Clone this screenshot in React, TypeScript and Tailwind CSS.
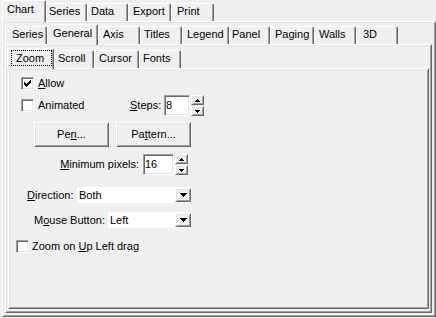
import React from "react";

const panel =
  "border border-t-white border-l-white border-r-[#696969] border-b-[#696969] shadow-[inset_1px_1px_0_#e3e3e3,inset_-1px_-1px_0_#a0a0a0]";
const raised =
  "border border-t-white border-l-white border-r-[#696969] border-b-[#696969] shadow-[inset_1px_1px_0_#e3e3e3,inset_-1px_-1px_0_#a0a0a0]";
const sunken =
  "border border-t-[#a0a0a0] border-l-[#a0a0a0] border-r-white border-b-white shadow-[inset_1px_1px_0_#696969,inset_-1px_-1px_0_#e3e3e3]";

type TabDef = { label: React.ReactNode; cls: string; sel?: boolean; focus?: boolean };

function Tab({ t, selH }: { t: TabDef; selH: string }) {
  if (t.sel) {
    return (
      <div
        className={`relative z-10 -mb-px ${selH} ${t.cls} shrink-0 bg-[#f0f0f0] border-t border-l border-r border-t-white border-l-white border-r-[#696969] rounded-t-[2px] shadow-[inset_-1px_0_0_#a0a0a0]`}
      >
        {t.focus ? (
          <div className="ml-[3px] mt-px h-[16px] w-[41px] border border-dotted border-black pl-[4px] leading-[14px]">
            {t.label}
          </div>
        ) : (
          <div className="pt-px leading-[14px] whitespace-nowrap">{t.label}</div>
        )}
      </div>
    );
  }
  return (
    <div
      className={`h-[18px] ${t.cls} shrink-0 border-t border-l border-r border-t-white border-l-white border-r-[#696969] rounded-t-[2px] shadow-[inset_-1px_0_0_#a0a0a0] leading-[14px] whitespace-nowrap`}
    >
      {t.label}
    </div>
  );
}

function CheckBox({ checked }: { checked?: boolean }) {
  const cols: [number, number][] = [
    [0, 2],
    [1, 3],
    [2, 4],
    [3, 3],
    [4, 2],
    [5, 1],
    [6, 0],
  ];
  return (
    <div className={`h-[13px] w-[13px] shrink-0 bg-white ${sunken}`}>
      {checked && (
        <svg width="11" height="11" viewBox="0 0 11 11" shapeRendering="crispEdges">
          {cols.map(([c, r]) => (
            <rect key={c} x={2 + c} y={2 + r} width="1" height="3" fill="#000" />
          ))}
        </svg>
      )}
    </div>
  );
}

function Spin() {
  return (
    <div className="ml-px flex h-[21px] w-[13px] flex-col gap-px">
      <div className={`flex h-[10px] items-center justify-center bg-[#f0f0f0] ${raised}`}>
        <svg width="5" height="3" viewBox="0 0 5 3" shapeRendering="crispEdges">
          <rect x="2" y="0" width="1" height="1" fill="#000" />
          <rect x="1" y="1" width="3" height="1" fill="#000" />
          <rect x="0" y="2" width="5" height="1" fill="#000" />
        </svg>
      </div>
      <div className={`flex h-[10px] items-center justify-center bg-[#f0f0f0] ${raised}`}>
        <svg width="5" height="3" viewBox="0 0 5 3" shapeRendering="crispEdges">
          <rect x="0" y="0" width="5" height="1" fill="#000" />
          <rect x="1" y="1" width="3" height="1" fill="#000" />
          <rect x="2" y="2" width="1" height="1" fill="#000" />
        </svg>
      </div>
    </div>
  );
}

function Combo({ value, w }: { value: string; w: string }) {
  return (
    <div className={`flex h-[16px] ${w} items-center bg-white pr-px`}>
      <div className="flex-1 pl-[2px] leading-[14px]">{value}</div>
      <div className={`flex h-[14px] w-[16px] items-center justify-center bg-[#f0f0f0] ${raised}`}>
        <svg width="7" height="4" viewBox="0 0 7 4" shapeRendering="crispEdges">
          <rect x="0" y="0" width="7" height="1" fill="#000" />
          <rect x="1" y="1" width="5" height="1" fill="#000" />
          <rect x="2" y="2" width="3" height="1" fill="#000" />
          <rect x="3" y="3" width="1" height="1" fill="#000" />
        </svg>
      </div>
    </div>
  );
}

const row1: TabDef[] = [
  { label: "Chart", cls: "w-[44px] pl-[4px]", sel: true },
  { label: "Series", cls: "w-[41px] pl-[2px]" },
  { label: "Data", cls: "w-[41px] pl-[3px]" },
  { label: "Export", cls: "w-[43px] pl-[4px]" },
  { label: "Print", cls: "w-[43px] pl-[5px]" },
];

const row2: TabDef[] = [
  { label: "Series", cls: "w-[42px] pl-[6px]" },
  { label: "General", cls: "w-[51px] pl-[5px]", sel: true },
  { label: "Axis", cls: "w-[42px] pl-[4px]" },
  { label: "Titles", cls: "w-[42px] pl-[3px]" },
  { label: "Legend", cls: "w-[47px] pl-[4px]" },
  { label: "Panel", cls: "w-[41px] pl-[2px]" },
  { label: "Paging", cls: "w-[44px] pl-[4px]" },
  { label: "Walls", cls: "w-[42px] pl-[4px]" },
  { label: "3D", cls: "w-[42px] pl-[6px]" },
];

const row3: TabDef[] = [
  { label: "Zoom", cls: "w-[47px]", sel: true, focus: true },
  { label: "Scroll", cls: "w-[40px] pl-[3px]" },
  { label: "Cursor", cls: "w-[45px] pl-[4px]" },
  { label: "Fonts", cls: "w-[42px] pl-[3px]" },
];

export default function App() {
  return (
    <div
      className="h-[318px] w-[436px] overflow-hidden bg-[#f0f0f0] pl-[2px] text-[11px] text-black"
      style={{ fontFamily: '"Liberation Sans", Arial, sans-serif' }}
    >
      <div className="flex h-[21px] items-end">
        {row1.map((t, i) => (
          <Tab key={i} t={t} selH="h-[22px]" />
        ))}
      </div>
      <div className={`${panel} flex h-[296px] w-[434px] flex-col pb-[3px] pl-[2px] pr-[3px]`}>
        <div className="flex h-[22px] items-end">
          {row2.map((t, i) => (
            <Tab key={i} t={t} selH="h-[21px]" />
          ))}
        </div>
        <div className={`${panel} flex flex-1 flex-col pb-[3px] pl-[2px] pr-[2px]`}>
          <div className="-ml-px flex h-[23px] items-end">
            {row3.map((t, i) => (
              <Tab key={i} t={t} selH="h-[21px]" />
            ))}
          </div>
          <div className={`${panel} flex-1 pl-[7px] pt-[8px]`}>
            <div className="ml-[5px] flex h-[13px] items-center">
              <CheckBox checked />
              <span className="ml-[4px]">
                <u>A</u>llow
              </span>
            </div>

            <div className="ml-[5px] mt-[5px] flex h-[21px] items-center">
              <div className="flex w-[109px] items-center">
                <CheckBox />
                <span className="ml-[4px]">Animated</span>
              </div>
              <div className="w-[34px]">
                <u>S</u>teps:
              </div>
              <div className={`flex h-[21px] w-[26px] items-center bg-white pl-px ${sunken}`}>8</div>
              <Spin />
            </div>

            <div className="ml-[18px] mt-[6px] flex gap-[7px]">
              <div className={`flex h-[25px] w-[75px] items-center justify-center ${raised}`}>
                <span>
                  Pe<u>n</u>...
                </span>
              </div>
              <div className={`flex h-[25px] w-[75px] items-center justify-center ${raised}`}>
                <span>
                  Pa<u>t</u>tern...
                </span>
              </div>
            </div>

            <div className="mt-[7px] flex h-[21px] items-center">
              <div className="w-[123px] text-right">
                <u>M</u>inimum pixels:
              </div>
              <div className={`ml-[4px] flex h-[21px] w-[31px] items-center bg-white pl-px ${sunken}`}>16</div>
              <Spin />
            </div>

            <div className="ml-[11px] mt-[12px] flex h-[16px] items-center">
              <div className="w-[50px]">
                <u>D</u>irection:
              </div>
              <Combo value="Both" w="w-[115px]" />
            </div>

            <div className="ml-[18px] mt-[9px] flex h-[16px] items-center">
              <div className="w-[74px] whitespace-nowrap">
                M<u>o</u>use Button:
              </div>
              <Combo value="Left" w="w-[84px]" />
            </div>

            <div className="mt-[12px] flex h-[13px] items-center">
              <CheckBox />
              <span className="ml-[3px]">
                Zoom on <u>U</u>p Left drag
              </span>
            </div>
          </div>
        </div>
      </div>
    </div>
  );
}
